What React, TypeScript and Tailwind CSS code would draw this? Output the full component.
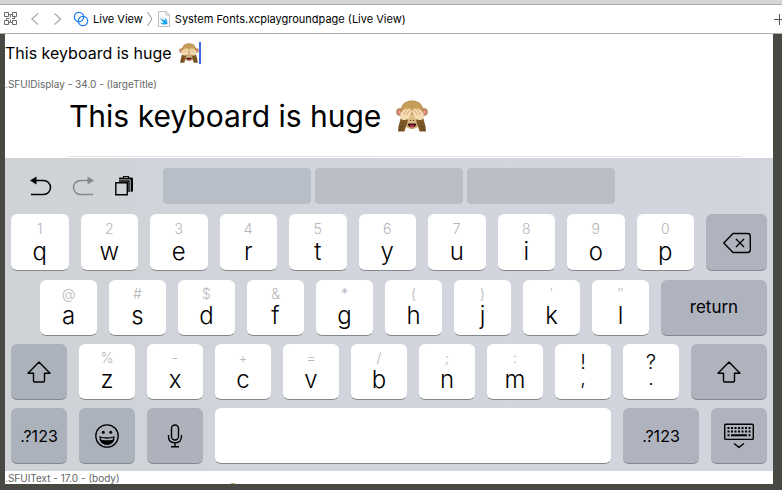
import type { ReactNode } from "react";

function Monkey({ className }: { className: string }) {
  return (
    <svg className={className} viewBox="0 0 32 32" role="img" aria-label="see-no-evil monkey">
      <circle cx="4" cy="12" r="3.8" fill="#a8803f" />
      <circle cx="3.8" cy="12.2" r="2.4" fill="#ee8f8d" />
      <circle cx="28" cy="12" r="3.800" fill="#a8803f" />
      <circle cx="28.2" cy="12.2" r="2.400" fill="#ee8f8d" />
      <path d="M16 .5C8.500.5 4.500 5.500 4.500 12c0 8 4.800 17 11.500 17s11.500-9 11.500-17C27.500 5.500 23.500.5 16 .5Z" fill="#b08748" />
      <path d="M16 1.200c-5.500 0-9.500 3.300-10.500 8.800h21c-1-5.500-5-8.800-10.500-8.800Z" fill="#c79e59" />
      <path d="M16 14c-4 3-6 8-5.500 11.500 1 3.500 10 3.500 11 0C22 22 20 17 16 14Z" fill="#dcbb88" />
      <path d="M14 20.500h1.200M17 20.500h1.200" stroke="#5d3c16" strokeWidth="1" />
      <path d="M11.500 23.500h9c-.5 3-2.500 4-4.500 4s-4-1-4.500-4Z" fill="#3d1014" />
      <path d="M13.500 26c1.500-1.200 3.500-1.200 5 0-1.500 1.400-3.500 1.400-5 0Z" fill="#e0365e" />
      <path d="M5 17c-1 5-3 9-3 14.500h6.500L12 20l-4-3Z" fill="#80592a" />
      <path d="M27 17c1 5 3 9 3 14.500h-6.500L20 20l4-3Z" fill="#80592a" />
      <path d="M4 25v6M7 22l-1 9M28 25v6M25 22l1 9" stroke="#5b3d1b" strokeWidth=".7" />
      <path d="M4.800 18.500c-1-3-.6-6 1.200-7.500l3-2c1-1 2.200 0 1.700 1l2.100-1.500c1.200-.6 2 .5 1.200 1.500 1.600-.6 2.200.8 1.700 2.200l-1.500 4c-1.700 3.500-6.500 5.300-9.400 2.300Z" fill="#f3dab0" />
      <path d="M27.200 18.500c1-3 .6-6-1.200-7.500l-3-2c-1-1-2.200 0-1.700 1l-2.100-1.500c-1.200-.6-2 .5-1.200 1.500-1.600-.6-2.200.8-1.700 2.200l1.500 4c1.700 3.500 6.500 5.300 9.400 2.300Z" fill="#f3dab0" />
      <path d="m10.500 10-3 4M14 10l-4 5M21.500 10l3 4M18 10l4 5" stroke="#c99f62" strokeWidth=".8" />
    </svg>
  );
}

function Key({ hint, label, tall = false }: { hint: string; label: string; tall?: boolean }) {
  return (
    <button
      className={`flex min-w-0 flex-1 flex-col items-center rounded-md border-b border-[#86888c] bg-white ${
        tall ? "gap-[3px] pt-[7px]" : "gap-0.5 pt-1.5"
      }`}
    >
      <span className="text-sm leading-4 font-light text-[#b4b4b8]">{hint}</span>
      <span className="text-2xl leading-6 font-light">{label}</span>
    </button>
  );
}

function PunctuationKey({ upper, lower }: { upper: string; lower: string }) {
  return (
    <button className="flex min-w-0 flex-1 flex-col items-center rounded-md border-b border-[#86888c] bg-white pt-2.5 text-xl leading-4 font-light">
      <span>{upper}</span>
      <span>{lower}</span>
    </button>
  );
}

function DarkKey({
  name,
  className,
  children,
}: {
  name: string;
  className: string;
  children: ReactNode;
}) {
  return (
    <button
      aria-label={name}
      className={`flex shrink-0 items-center justify-center rounded-md border-b border-[#86888c] ${className}`}
    >
      {children}
    </button>
  );
}

function ShiftIcon() {
  return (
    <svg className="h-[22px] w-6" viewBox="0 0 24 22" fill="none" stroke="#000" strokeWidth="1.4" strokeLinejoin="round">
      <path d="M12 1 1 12.200h5.500V20c0 .6.400 1 1 1h9c.6 0 1-.4 1-1v-7.800H23Z" />
    </svg>
  );
}

const topRow = ["1q", "2w", "3e", "4r", "5t", "6y", "7u", "8i", "9o", "0p"];
const homeRow = ["@a", "#s", "$d", "&f", "*g", "(h", ")j", "′k", "″l"];
const bottomRow = ["%z", "-x", "+c", "=v", "/b", ";n", ":m"];

export default function App() {
  return (
    <div className="flex min-h-screen flex-col bg-[#484942] font-['Inter','Liberation_Sans',sans-serif] text-black">
      <div className="h-[5px] border-b border-[#aeaeae] bg-[#d6d6d6]" />
      <header className="flex h-[29px] items-center overflow-hidden border-b border-[#aeaeae] bg-white pl-1 text-[11px] leading-4">
        <button aria-label="Related items">
          <svg className="h-3.5 w-3.5" viewBox="0 0 14 14" fill="none" stroke="#6b6b6b">
            <path d="M.5.5h4v4h-4ZM8.500.5h4v4h-4ZM.5 8.500h4v4h-4ZM8.500 8.500h4v4h-4ZM5 2.500h1.500v3M8 2.500H7M2.500 8V6.500h3M10.500 5v1.500H8M5 10.500h1.500v-3M8 10.500H7" />
          </svg>
        </button>
        <button aria-label="Back" className="ml-3">
          <svg className="h-3.5 w-2.5" viewBox="0 0 10 14" fill="none" stroke="#b0b0b0" strokeWidth="1.500">
            <path d="M8 1.500 2 7l6 5.500" />
          </svg>
        </button>
        <button aria-label="Forward" className="ml-3">
          <svg className="h-3.5 w-2.5" viewBox="0 0 10 14" fill="none" stroke="#b0b0b0" strokeWidth="1.500">
            <path d="m2.500 1.500 6 5.500-6 5.500" />
          </svg>
        </button>
        <svg className="ml-[11px] h-4 w-4" viewBox="0 0 16 16" fill="none" stroke="#1d7bf2" strokeWidth="1.200">
          <circle cx="6" cy="6" r="4.700" />
          <circle cx="10" cy="10" r="4.700" />
        </svg>
        <a href="#live" className="ml-1 whitespace-nowrap">Live View</a>
        <svg className="mx-1 h-4 w-1.5" viewBox="0 0 6 16" fill="none" stroke="#8e8e8e">
          <path d="m.5 1 4.500 7L.5 15" />
        </svg>
        <svg className="h-4 w-3.5" viewBox="0 0 14 16">
          <path d="M1.500.5h7.500l3.500 3.500v11.500h-11Z" fill="#fbfbfb" stroke="#bdbdbd" />
          <path d="M9 .5V4h3.500" fill="none" stroke="#bdbdbd" />
          <path d="M3 6.500c1.500 1.500 3 2.500 4 3L4.500 6.800c1.800 1.500 3 2.400 3.800 2.800.2-1-.1-2-.6-2.900 2 1.300 2.800 3.300 2.400 4.800.7.800.6 1.600.4 2-.6-.7-1.200-.7-1.800-.3-2 .8-4.400.2-5.700-2 1.300.8 2.600 1 3.600.5C5.300 10.500 4 8.300 3 6.500Z" fill="#18a5ee" />
        </svg>
        <a href="#page" className="ml-1 whitespace-nowrap">System Fonts.xcplaygroundpage (Live View)</a>
        <button aria-label="Add editor" className="ml-auto">
          <svg className="h-3 w-2" viewBox="0 0 8 12" stroke="#555">
            <path d="M0 6.500h8M5.500 1v11" />
          </svg>
        </button>
      </header>

      <main className="mr-[9px] mb-1.5 ml-[5px] flex flex-1 flex-col bg-white">
        <div className="flex flex-col pt-2">
          <div className="flex h-[22px] items-center">
            <input
              aria-label="Sample text"
              defaultValue="This keyboard is huge"
              className="field-sizing-content h-[22px] text-base leading-[22px] outline-none"
            />
            <Monkey className="ml-[7px] h-5 w-5" />
            <span className="h-[22px] w-0.5 bg-[#3f69e6]" />
          </div>
          <p className="mt-3.5 text-[10px] leading-3 text-[#666]">.SFUIDisplay - 34.0 - (largeTitle)</p>
          <div className="mt-1.5 ml-16 flex h-10 items-center">
            <h1 className="text-3xl leading-10">This keyboard is huge</h1>
            <Monkey className="ml-[15px] h-8 w-8" />
          </div>
          <hr className="mt-5 mr-8 mb-px ml-16 border-t border-[#e1e3e6]" />
        </div>

        <section aria-label="Keyboard" className="flex flex-col bg-linear-to-r from-[#cfd3d7] to-[#d2d5dd] to-50% px-1.5 pt-2.5 pb-[7px]">
          <div className="mb-2.5 flex h-9 items-center pr-[152px] pl-[19px]">
            <button aria-label="Undo">
              <svg className="h-5 w-[22px]" viewBox="0 0 22 20" fill="none" stroke="#000" strokeWidth="1.500">
                <path d="M6 4.500h7.500a7 7 0 0 1 0 14H1" />
                <path d="M0 4.500 6.500.5v8Z" fill="#000" stroke="none" />
              </svg>
            </button>
            <button aria-label="Redo" className="ml-5">
              <svg className="h-5 w-[22px]" viewBox="0 0 22 20" fill="none" stroke="#85888c" strokeWidth="1.500">
                <path d="M16 4.500H8.500a7 7 0 0 0 0 14H21" />
                <path d="M22 4.500 15.500.5v8Z" fill="#85888c" stroke="none" />
              </svg>
            </button>
            <button aria-label="Paste" className="ml-5">
              <svg className="h-5 w-5" viewBox="0 0 20 20" fill="none">
                <path d="M5 4V2.700c0-.7.400-1.200 1.200-1.200H9V0h6v1.500h2.500c.9 0 1.500.6 1.500 1.500v11.200c0 1-.5 1.500-1.500 1.500h-1.200V4Z" fill="#000" />
                <path d="M10 1.500h4" stroke="#999" />
                <path d="M5 3.700h11.300v12" stroke="#cfd3d7" strokeWidth=".7" />
                <path d="M5 5h10v11" stroke="#000" strokeWidth="1.400" />
                <path d="M1.800 6.700h11.500v12H1.800Z" fill="#cfd3d7" stroke="#000" strokeWidth="1.400" />
              </svg>
            </button>
            <div className="ml-[29px] flex h-9 flex-1 gap-1">
              <button aria-label="Suggestion 1" className="flex-1 rounded bg-[#b7bec7]" />
              <button aria-label="Suggestion 2" className="flex-1 rounded bg-[#b9bec7]" />
              <button aria-label="Suggestion 3" className="flex-1 rounded bg-[#babec7]" />
            </div>
          </div>

          <div className="mb-[9px] flex h-[57px] gap-3">
            {topRow.map((k) => (
              <Key key={k} hint={k[0]} label={k[1]} tall />
            ))}
            <DarkKey name="Delete" className="w-[61px] bg-[#afb3be] pt-px">
              <svg className="h-[22px] w-7" viewBox="0 0 28 22" fill="none" stroke="#000" strokeWidth="1.400" strokeLinejoin="round">
                <path d="M10 1.500h14.500c1.700 0 2.800 1 2.800 2.700v13.600c0 1.700-1.100 2.700-2.800 2.700H10L.8 11Z" />
                <path d="m13 7 8 8m0-8-8 8" />
              </svg>
            </DarkKey>
          </div>

          <div className="mb-2 flex h-14 gap-3 pl-[29px]">
            {homeRow.map((k) => (
              <Key key={k} hint={k[0]} label={k[1]} />
            ))}
            <DarkKey name="return" className="w-[106px] bg-[#afb3be] text-[17px]">
              return
            </DarkKey>
          </div>

          <div className="mb-2 flex h-14 gap-3">
            <DarkKey name="Shift" className="w-14 bg-[#abb2bc]">
              <ShiftIcon />
            </DarkKey>
            {bottomRow.map((k) => (
              <Key key={k} hint={k[0]} label={k[1]} />
            ))}
            <PunctuationKey upper="!" lower="," />
            <PunctuationKey upper="?" lower="." />
            <DarkKey name="Right shift" className="w-[76px] bg-[#afb3be]">
              <ShiftIcon />
            </DarkKey>
          </div>

          <div className="flex h-14 gap-3">
            <DarkKey name=".?123" className="w-14 bg-[#abb2bc] text-base">
              .?123
            </DarkKey>
            <DarkKey name="Emoji" className="w-14 bg-[#abb2bc]">
              <svg className="h-6 w-6" viewBox="0 0 24 24" fill="none" stroke="#000" strokeWidth="1.300">
                <circle cx="12" cy="12" r="11.200" />
                <circle cx="8.300" cy="8.300" r="1.500" fill="#000" stroke="none" />
                <circle cx="15.700" cy="8.300" r="1.500" fill="#000" stroke="none" />
                <path d="M5 13c4.500 1.300 9.500 1.300 14 0-.3 4.500-3.300 7-7 7s-6.700-2.500-7-7Z" />
                <path d="M5.500 16c4.300 1.300 8.700 1.300 13 0-1 2.700-3.500 4-6.500 4s-5.500-1.300-6.500-4Z" fill="#000" />
              </svg>
            </DarkKey>
            <DarkKey name="Dictate" className="w-14 bg-[#adb2bc]">
              <svg className="h-6 w-4" viewBox="0 0 16 24" fill="none" stroke="#000" strokeWidth="1.400">
                <rect x="4.500" y="1" width="7" height="15" rx="3.500" />
                <path d="M1.500 11v1.500c0 4 2.500 6.300 6.500 6.300s6.500-2.300 6.500-6.300V11M8 19v3.800M4 22.800h8" />
              </svg>
            </DarkKey>
            <button aria-label="Space" className="min-w-0 flex-1 rounded-md border-b border-[#86888c] bg-white" />
            <DarkKey name=".?123 right" className="w-[76px] bg-[#afb3be] text-base">
              .?123
            </DarkKey>
            <DarkKey name="Hide keyboard" className="w-14 bg-[#afb3be]">
              <svg className="h-[26px] w-[30px]" viewBox="0 0 30 26" fill="none" stroke="#000" strokeWidth="1.400">
                <rect x=".7" y="1.200" width="28.600" height="15.200" rx="1" />
                <path d="M3.500 5h23M3.500 8.600h23" strokeWidth="2" strokeDasharray="2 1.500" />
                <path d="M3.500 12.300h2M7 12.300h16M24.500 12.300h2" strokeWidth="2" />
                <path d="m10 20.500 5 3.800 5-3.800" />
              </svg>
            </DarkKey>
          </div>
        </section>

        <div className="h-[13px] overflow-hidden">
          <p className="pt-0.5 text-[10px] leading-[10px] text-[#666]">.SFUIText - 17.0 - (body)</p>
          <div className="ml-[219px]">
            <Monkey className="h-[18px] w-[18px]" />
          </div>
        </div>
      </main>
    </div>
  );
}
